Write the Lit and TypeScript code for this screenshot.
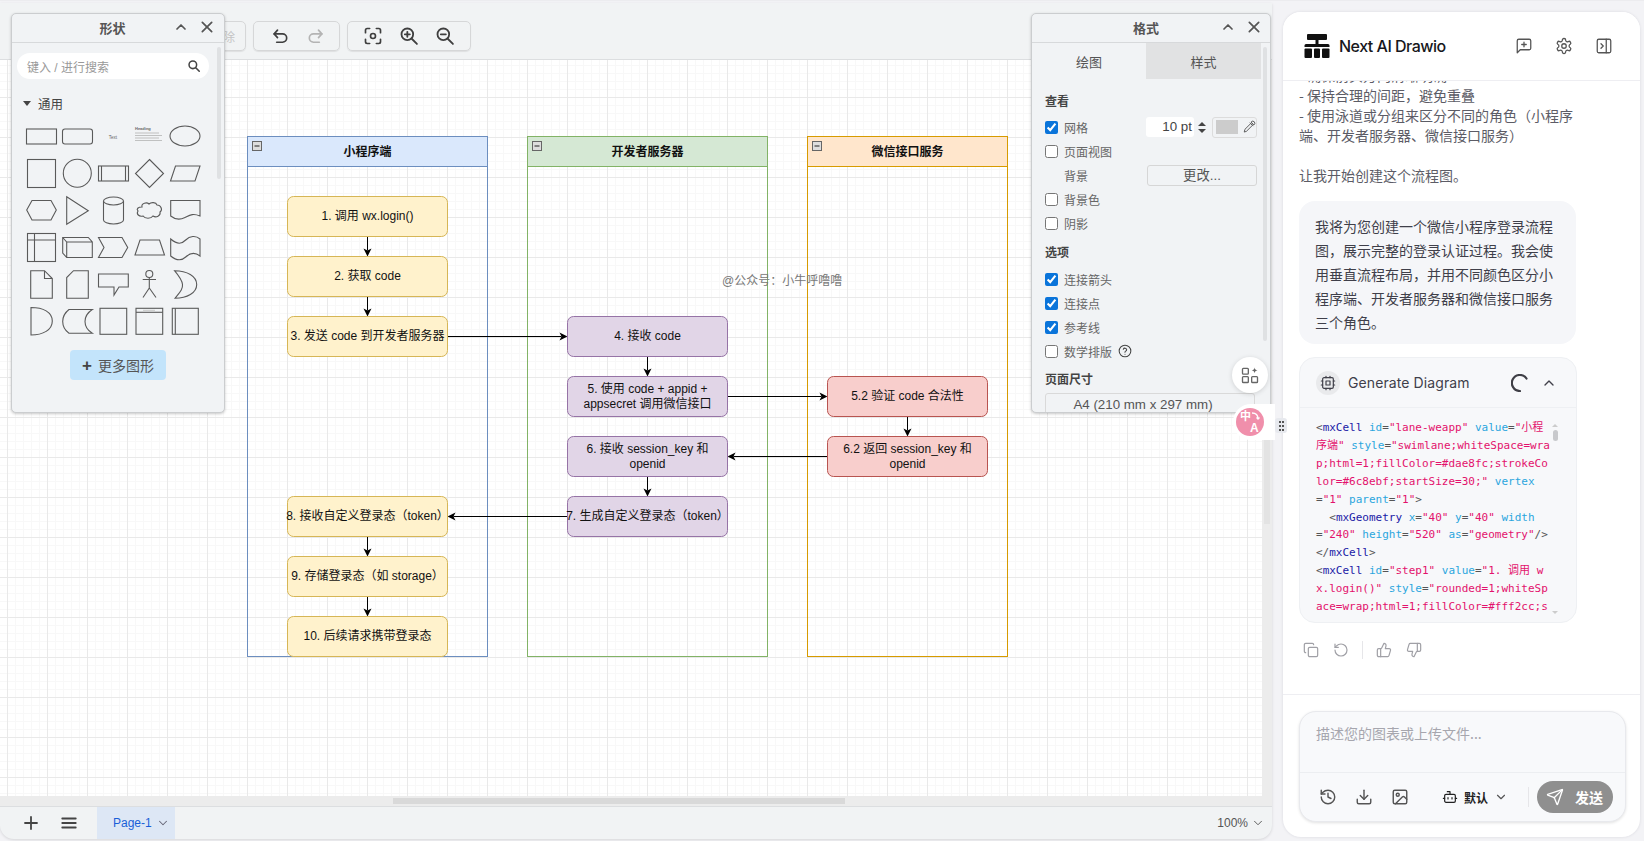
import { LitElement, html, css, svg } from 'lit';
import { customElement } from 'lit/decorators.js';

// --- diagram data (page coordinates) ---
type Tone = 'yellow' | 'purple' | 'red';
const lanes = [
  { x: 247.5, w: 240, title: '小程序端', fill: '#dae8fc', stroke: '#6c8ebf' },
  { x: 527.5, w: 240, title: '开发者服务器', fill: '#d5e8d4', stroke: '#82b366' },
  { x: 807.5, w: 200, title: '微信接口服务', fill: '#ffe6cc', stroke: '#d79b00' },
];
const tones: Record<Tone, [string, string]> = {
  yellow: ['#fff2cc', '#d6b656'],
  purple: ['#e1d5e7', '#9673a6'],
  red: ['#f8cecc', '#b85450'],
};
const nodes: { x: number; y: number; tone: Tone; text: string[] }[] = [
  { x: 287.5, y: 196.5, tone: 'yellow', text: ['1. 调用 wx.login()'] },
  { x: 287.5, y: 256.5, tone: 'yellow', text: ['2. 获取 code'] },
  { x: 287.5, y: 316.5, tone: 'yellow', text: ['3. 发送 code 到开发者服务器'] },
  { x: 567.5, y: 316.5, tone: 'purple', text: ['4. 接收 code'] },
  { x: 567.5, y: 376.5, tone: 'purple', text: ['5. 使用 code + appid +', 'appsecret 调用微信接口'] },
  { x: 827.5, y: 376.5, tone: 'red', text: ['5.2 验证 code 合法性'] },
  { x: 827.5, y: 436.5, tone: 'red', text: ['6.2 返回 session_key 和', 'openid'] },
  { x: 567.5, y: 436.5, tone: 'purple', text: ['6. 接收 session_key 和', 'openid'] },
  { x: 567.5, y: 496.5, tone: 'purple', text: ['7. 生成自定义登录态（token）'] },
  { x: 287.5, y: 496.5, tone: 'yellow', text: ['8. 接收自定义登录态（token）'] },
  { x: 287.5, y: 556.5, tone: 'yellow', text: ['9. 存储登录态（如 storage）'] },
  { x: 287.5, y: 616.5, tone: 'yellow', text: ['10. 后续请求携带登录态'] },
];
const edges = [
  [367.5, 236.5, 367.5, 256.5],
  [367.5, 296.5, 367.5, 316.5],
  [647.5, 356.5, 647.5, 376.5],
  [907.5, 416.5, 907.5, 436.5],
  [647.5, 476.5, 647.5, 496.5],
  [367.5, 536.5, 367.5, 556.5],
  [367.5, 596.5, 367.5, 616.5],
  [447.5, 336.5, 567.5, 336.5],
  [727.5, 396.5, 827.5, 396.5],
  [827.5, 456.5, 727.5, 456.5],
  [567.5, 516.5, 447.5, 516.5],
];

// --- code block tokens: p punctuation, t tag, a attr, s string ---
type Tok = [string, string];
const codeLines: Tok[][] = [
  [['p', '<'], ['t', 'mxCell'], ['a', ' id'], ['p', '='], ['s', '"lane-weapp"'], ['a', ' value'], ['p', '='], ['s', '"小程']],
  [['s', '序端"'], ['a', ' style'], ['p', '='], ['s', '"swimlane;whiteSpace=wra']],
  [['s', 'p;html=1;fillColor=#dae8fc;strokeCo']],
  [['s', 'lor=#6c8ebf;startSize=30;"'], ['a', ' vertex']],
  [['p', '='], ['s', '"1"'], ['a', ' parent'], ['p', '='], ['s', '"1"'], ['p', '>']],
  [['p', '  <'], ['t', 'mxGeometry'], ['a', ' x'], ['p', '='], ['s', '"40"'], ['a', ' y'], ['p', '='], ['s', '"40"'], ['a', ' width']],
  [['p', '='], ['s', '"240"'], ['a', ' height'], ['p', '='], ['s', '"520"'], ['a', ' as'], ['p', '='], ['s', '"geometry"'], ['p', '/>']],
  [['p', '</'], ['t', 'mxCell'], ['p', '>']],
  [['p', '<'], ['t', 'mxCell'], ['a', ' id'], ['p', '='], ['s', '"step1"'], ['a', ' value'], ['p', '='], ['s', '"1. 调用 w']],
  [['s', 'x.login()"'], ['a', ' style'], ['p', '='], ['s', '"rounded=1;whiteSp']],
  [['s', 'ace=wrap;html=1;fillColor=#fff2cc;s']],
];

// lucide style stroke icon
const icon = (body: unknown, size = 18, sw = 2) => html`<svg class="ico" width=${size} height=${size} viewBox="0 0 24 24" fill="none" stroke="currentColor" stroke-width=${sw} stroke-linecap="round" stroke-linejoin="round">${body}</svg>`;

const chevUp = svg`<path d="m6 15 6-6 6 6"/>`;
const chevDown = svg`<path d="m6 9 6 6 6-6"/>`;
const closeX = svg`<path d="M5 5l14 14M19 5 5 19"/>`;

@customElement('app-root')
export class AppRoot extends LitElement {
  static styles = css`
    * {
      box-sizing: border-box;
    }

    :host {
      display: block;
      width: 1644px;
      height: 841px;
      overflow: hidden;
      background: #f3f3f6;
      font-family: "Liberation Sans", "Noto Sans CJK SC", sans-serif;
      color: #444;
    }

    .ico {
      display: block;
      flex: none;
    }

    .page {
      position: relative;
      display: flex;
      height: 841px;
      border-top: 1px solid #ececef;
    }

    /* editor */
    .editor {
      position: relative;
      display: flex;
      flex-direction: column;
      width: 1272px;
      height: 836px;
      margin-top: 2px;
      background: #f1f3f4;
      border-radius: 0 0 14px 14px;
      overflow: hidden;
      box-shadow: 0 1px 3px rgba(0, 0, 0, .12);
    }

    .toolbar {
      display: flex;
      gap: 7px;
      height: 57px;
      padding: 18px 0 0 190px;
      border-bottom: 1px solid #dcdee0;
      flex: none;
    }

    .tgroup {
      display: flex;
      align-items: center;
      height: 30px;
      border: 1px solid #d6d7d8;
      border-radius: 5px;
      box-shadow: 0 1px 1px rgba(0, 0, 0, .08);
      color: #3f3f3f;
    }

    .tgroup.del {
      width: 56px;
      justify-content: flex-end;
      padding-right: 10px;
      font-size: 12px;
      color: #c4c4c4;
    }

    .tgroup.undo {
      width: 87px;
      gap: 16px;
      padding-left: 16px;
    }

    .tgroup.view {
      width: 124px;
      gap: 16px;
      padding-left: 15px;
    }

    .faded {
      color: #b4b4b4;
    }

    .stage {
      flex: 1;
      display: grid;
      grid-template-columns: 1262px 10px;
      grid-template-rows: 736px 10px;
    }

    .canvas {
      position: relative;
      background-color: #fff;
      background-image:
        linear-gradient(#e9e9e9 1px, transparent 1px),
        linear-gradient(90deg, #e9e9e9 1px, transparent 1px),
        linear-gradient(#f8f8f8 1px, transparent 1px),
        linear-gradient(90deg, #f8f8f8 1px, transparent 1px);
      background-size: 40px 40px, 40px 40px, 8px 8px, 8px 8px;
      background-position: 0 37px, 7px 0, 0 5px, 7px 0;
      overflow: hidden;
    }

    .diagram {
      position: absolute;
      left: 0;
      top: 0;
      width: 1262px;
      height: 736px;
    }

    .diagram text {
      font-family: "Liberation Sans", "Noto Sans CJK SC", sans-serif;
      font-size: 12px;
      fill: #111;
      text-anchor: middle;
    }

    .diagram text.lane {
      font-weight: 700;
    }

    .diagram text.mark {
      fill: #777;
      text-anchor: start;
    }

    .vtrack,
    .htrack,
    .corner {
      background: #ececec;
    }

    .vthumb {
      width: 6px;
      height: 464px;
      margin-left: 2px;
      background: #e3e3e3;
    }

    .hthumb {
      width: 452px;
      height: 6px;
      margin: 2px 0 0 393px;
      background: #d9d9d9;
    }

    .bottom {
      flex: 1;
      display: flex;
      align-items: center;
      border-top: 1px solid #dcdee0;
      font-size: 12px;
      color: #555;
    }

    .bottom .plus {
      margin-left: 22px;
      color: #444;
    }

    .bottom .menu {
      margin-left: 20px;
      color: #444;
    }

    .pagetab {
      display: flex;
      align-items: center;
      width: 78px;
      height: 100%;
      margin-left: 19px;
      padding-left: 16px;
      gap: 4px;
      background: #dde7f5;
      color: #1a5fd8;
    }

    .pagetab .ico {
      color: #667;
    }

    .zoomval {
      display: flex;
      align-items: center;
      gap: 3px;
      margin-left: auto;
      margin-right: 7px;
      color: #555;
    }

    /* floating panels */
    .panel {
      position: absolute;
      top: 10px;
      height: 400px;
      background: #f1f3f5;
      border: 1px solid #cbcdcf;
      border-radius: 5px;
      box-shadow: 0 1px 3px rgba(0, 0, 0, .22);
      overflow: hidden;
    }

    .panel.shapes {
      left: 11px;
      width: 214px;
    }

    .panel.format {
      left: 1031px;
      width: 240px;
    }

    .phead {
      display: flex;
      align-items: center;
      height: 29px;
      padding: 0 9px 2px 40px;
      border-bottom: 1px solid #d7d9db;
      color: #555;
    }

    .ptitle {
      flex: 1;
      text-align: center;
      font-size: 13px;
      font-weight: 700;
    }

    .phead .chev {
      margin-right: 10px;
    }

    .format .phead {
      padding-right: 8px;
    }

    .search {
      display: flex;
      align-items: center;
      justify-content: space-between;
      width: 192px;
      height: 26px;
      margin: 10px 0 0 5px;
      padding: 0 8px 0 10px;
      background: #fff;
      border-radius: 13px;
      font-size: 12px;
      color: #999;
    }

    .search .ico {
      color: #444;
    }

    .section {
      display: flex;
      align-items: center;
      gap: 7px;
      height: 18px;
      margin: 15px 0 0 11px;
      font-size: 12.5px;
      color: #444;
    }

    .section i {
      width: 0;
      height: 0;
      border: 4px solid transparent;
      border-top: 5px solid #444;
      border-bottom: 0;
    }

    .shapeset {
      display: block;
      margin: 8px 0 0 3px;
    }

    .more {
      display: flex;
      align-items: center;
      justify-content: center;
      gap: 6px;
      width: 96px;
      height: 30px;
      margin: 10px 0 0 58px;
      background: #c3e4fb;
      border-radius: 4px;
      font-size: 14px;
      color: #555;
    }

    .more b {
      font-size: 17px;
      line-height: 1;
      color: #444;
    }

    .pscroll {
      position: absolute;
      width: 4px;
      top: 33px;
      background: #dfe1e3;
      border-radius: 2px;
    }

    .shapes .pscroll {
      left: 205px;
      height: 132px;
    }

    .format .pscroll {
      left: 231px;
      height: 294px;
    }

    .tabs {
      display: flex;
      height: 36px;
      font-size: 13px;
      color: #555;
    }

    .tabs div {
      display: flex;
      align-items: center;
      justify-content: center;
      width: 114px;
    }

    .tabs .off {
      width: 115px;
      background: #e1e2e3;
    }

    .fbody {
      padding: 14px 13px 0 13px;
      font-size: 12px;
      color: #666;
    }

    .ftitle {
      height: 18px;
      margin-bottom: 4px;
      line-height: 18px;
      font-weight: 700;
      color: #444;
    }

    .ftitle.gap {
      margin-top: 9px;
      margin-bottom: 5px;
    }

    .ftitle.gap2 {
      margin-top: 8px;
      margin-bottom: 4px;
    }

    .frow {
      display: flex;
      align-items: center;
      height: 24px;
    }

    .frow input {
      width: 13px;
      height: 13px;
      margin: 0 6px 0 0;
      accent-color: #0a74da;
    }

    .frow .indent {
      padding-left: 19px;
    }

    .num {
      width: 48px;
      height: 20px;
      margin-left: auto;
      padding-right: 2px;
      text-align: right;
      line-height: 20px;
      font-size: 13.33px;
      color: #444;
      background: #fff;
      border-radius: 3px;
    }

    .stepper {
      display: flex;
      flex-direction: column;
      align-items: center;
      justify-content: center;
      gap: 3px;
      width: 11px;
      height: 20px;
      margin-left: 2px;
    }

    .stepper i {
      width: 0;
      height: 0;
      border: 4px solid transparent;
      border-bottom: 4px solid #444;
      border-top: 0;
    }

    .stepper i.dn {
      border-top: 4px solid #444;
      border-bottom: 0;
    }

    .well {
      display: flex;
      align-items: center;
      gap: 4px;
      width: 45px;
      height: 21px;
      margin-left: 5px;
      padding-left: 3px;
      border: 1px solid #dcdcdc;
      border-radius: 3px;
      color: #555;
    }

    .well span {
      width: 23px;
      height: 14px;
      background: #ccc;
    }

    .change {
      width: 110px;
      height: 21px;
      margin-left: auto;
      line-height: 20px;
      text-align: center;
      font-size: 13.33px;
      border: 1px solid #d6d6d6;
      border-radius: 3px;
      color: #555;
    }

    .help {
      margin-left: 6px;
      color: #444;
    }

    .select {
      width: 210px;
      height: 30px;
      padding-right: 14px;
      line-height: 22px;
      text-align: center;
      font-size: 13.33px;
      border: 1px solid #d9d9d9;
      border-radius: 3px;
      color: #555;
    }

    /* floating helpers at the window's split */
    .fab {
      position: absolute;
      left: 1232px;
      top: 356px;
      display: flex;
      align-items: center;
      justify-content: center;
      width: 36px;
      height: 36px;
      background: #fff;
      border-radius: 50%;
      box-shadow: 0 1px 5px rgba(0, 0, 0, .14);
      color: #666;
    }

    .translate {
      position: absolute;
      left: 1233px;
      top: 403px;
      display: flex;
      align-items: center;
      width: 42px;
      height: 36px;
      padding-left: 3px;
      background: #fff;
      border-radius: 18px 0 0 18px;
    }

    .translate .disc {
      position: relative;
      width: 28px;
      height: 28px;
      background: #f08fab;
      border-radius: 50%;
      color: #fff;
      font-weight: 700;
      line-height: 1;
    }

    .disc span {
      position: absolute;
    }

    .disc .zh {
      left: 4px;
      top: 3px;
      font-size: 11px;
    }

    .disc .en {
      left: 14px;
      top: 14px;
      font-size: 12px;
    }

    .disc svg {
      position: absolute;
      left: 15px;
      top: 4px;
    }

    .handle {
      position: absolute;
      left: 1275px;
      top: 417px;
      display: grid;
      grid-template-columns: 2px 2px;
      grid-auto-rows: 2px;
      gap: 2px 1px;
      align-content: center;
      justify-content: center;
      width: 12px;
      height: 15px;
      background: #e7e9ee;
      border-radius: 3px;
    }

    .handle i {
      background: #555;
    }

    /* chat */
    .chat {
      display: flex;
      flex-direction: column;
      width: 357px;
      height: 825px;
      margin: 11px 0 0 11px;
      background: #fff;
      border-radius: 18px;
      box-shadow: 0 0 3px rgba(30, 30, 60, .12);
      overflow: hidden;
      font-family: "Inter", "Noto Sans CJK SC", sans-serif;
    }

    .chead {
      display: flex;
      align-items: center;
      height: 69px;
      padding: 0 27px 0 21px;
      border-bottom: 1px solid #eeeef2;
      flex: none;
      position: relative;
      z-index: 1;
      background: #fff;
      color: #555;
    }

    .logo {
      margin-right: 9px;
    }

    .brand {
      margin-right: auto;
      font-size: 16px;
      font-weight: 500;
      letter-spacing: -.5px;
      color: #17171c;
    }

    .chead .ico + .ico {
      margin-left: 22px;
    }

    .msgs {
      flex: 1;
      overflow: hidden;
      padding: 0 16px;
    }

    .plain {
      margin-top: -16px;
      font-size: 14px;
      line-height: 20px;
      color: #5c5c66;
      font-family: "Noto Sans CJK SC", sans-serif;
    }

    .bubble {
      width: 277px;
      height: 143px;
      margin-top: 16px;
      padding: 13px 16px;
      font-size: 14px;
      line-height: 24px;
      color: #3f3f4a;
      background: #f5f6f9;
      border-radius: 16px;
      font-family: "Noto Sans CJK SC", sans-serif;
    }

    .tool {
      position: relative;
      width: 278px;
      height: 266px;
      margin-top: 13px;
      background: #f7f8fa;
      border: 1px solid #eef0f3;
      border-radius: 16px;
      overflow: hidden;
    }

    .thead {
      display: flex;
      align-items: center;
      height: 50px;
      padding: 0 19px 0 16px;
      border-bottom: 1px solid #eef0f3;
      color: #40404a;
    }

    .chip {
      display: flex;
      align-items: center;
      justify-content: center;
      width: 24px;
      height: 24px;
      margin-right: 8px;
      background: #e9eaec;
      border-radius: 50%;
    }

    .tname {
      margin-right: auto;
      font-size: 14px;
      letter-spacing: .1px;
    }

    .spin {
      margin-right: 12px;
    }

    .code {
      padding: 11px 0 0 16px;
      font-family: "DejaVu Sans Mono", "Noto Sans CJK SC", monospace;
      font-size: 11px;
      line-height: 17.9px;
      white-space: pre;
    }

    .code .p { color: #555; }
    .code .t { color: #1a1aa6; }
    .code .a { color: #2ba6de; }
    .code .s { color: #e3126c; }

    .cscroll {
      position: absolute;
      left: 251px;
      top: 66px;
      display: flex;
      flex-direction: column;
      align-items: center;
      height: 190px;
      width: 8px;
    }

    .cscroll i {
      width: 0;
      height: 0;
      border: 3px solid transparent;
      border-bottom: 3px solid #ccc;
      border-top: 0;
    }

    .cscroll b {
      width: 5px;
      height: 11px;
      margin-top: 3px;
      background: #c8c9cc;
      border-radius: 3px;
    }

    .cscroll i.dn {
      margin-top: auto;
      border-top: 3px solid #ccc;
      border-bottom: 0;
    }

    .actions {
      display: flex;
      align-items: center;
      gap: 14px;
      margin-top: 18px;
      padding-left: 4px;
      color: #a0a0a6;
    }

    .actions u {
      width: 1px;
      height: 18px;
      margin: 0 -1px;
      background: #e6e6e9;
    }

    .foot {
      height: 143px;
      padding: 16px 14px 0 16px;
      border-top: 1px solid #eeeef2;
      flex: none;
    }

    .input {
      height: 111px;
      background: #f8f9fb;
      border: 1px solid #e8e9ed;
      border-radius: 17px;
      box-shadow: 0 1px 3px rgba(0, 0, 0, .12);
      display: flex;
      flex-direction: column;
    }

    .ph {
      height: 61px;
      padding: 11px 16px;
      font-size: 14px;
      line-height: 20px;
      color: #a6a6ae;
      border-bottom: 1px solid #eceef1;
      font-family: "Noto Sans CJK SC", sans-serif;
    }

    .ibar {
      flex: 1;
      display: flex;
      align-items: center;
      padding: 0 12px 0 19px;
      gap: 18px;
      color: #555;
    }

    .model {
      display: flex;
      align-items: center;
      flex: none;
      gap: 6px;
      margin-left: 15px;
      font-size: 12px;
      font-weight: 700;
      white-space: nowrap;
      color: #222;
    }

    .model .ico:last-child {
      margin-left: 0;
      color: #555;
    }

    .ibar u {
      width: 1px;
      height: 20px;
      margin-left: auto;
      margin-right: -10px;
      background: #e6e6e9;
    }

    .send {
      display: flex;
      align-items: center;
      flex: none;
      gap: 11px;
      width: 76px;
      height: 32px;
      padding-left: 9px;
      background: #8f8f8f;
      border-radius: 16px;
      font-size: 14px;
      font-weight: 700;
      white-space: nowrap;
      color: #fff;
    }
  `;

  renderDiagram() {
    return svg`<g transform="translate(0,-60)">
      ${lanes.map((l) => svg`
        <rect x=${l.x} y="136.5" width=${l.w} height="520" fill="none" stroke=${l.stroke}/>
        <rect x=${l.x} y="136.5" width=${l.w} height="30" fill=${l.fill} stroke=${l.stroke}/>
        <rect x=${l.x + 5} y="141.5" width="9" height="9" fill="#ddd" stroke="#666"/>
        <path d="M${l.x + 7} 146h5" stroke="#222"/>
        <text class="lane" x=${l.x + l.w / 2} y="155.5">${l.title}</text>
      `)}
      ${edges.map(([x1, y1, x2, y2]) => {
        const dx = Math.sign(x2 - x1);
        const dy = Math.sign(y2 - y1);
        // classic draw.io head: tip at the end, notch 2px short of the base
        const head = [
          [x2, y2],
          [x2 - dx * 8 - dy * 4, y2 - dy * 8 - dx * 4],
          [x2 - dx * 6, y2 - dy * 6],
          [x2 - dx * 8 + dy * 4, y2 - dy * 8 + dx * 4],
        ].map((p) => p.join(',')).join(' ');
        return svg`<line x1=${x1} y1=${y1} x2=${x2 - dx * 6} y2=${y2 - dy * 6} stroke="#000"/><polygon points=${head} fill="#000"/>`;
      })}
      ${nodes.map((n) => {
        const [fill, stroke] = tones[n.tone];
        const cx = n.x + 80;
        const start = n.text.length > 1 ? n.y + 16 : n.y + 23.5;
        return svg`<rect x=${n.x} y=${n.y} width="160" height="40" rx="6" fill=${fill} stroke=${stroke}/>
          ${n.text.map((t, i) => svg`<text x=${cx} y=${start + i * 15}>${t}</text>`)}`;
      })}
      <text class="mark" x="722" y="285">@公众号：小牛呼噜噜</text>
    </g>`;
  }

  renderShapes() {
    return html`<svg class="shapeset" width="200" height="220" viewBox="0 0 200 220" fill="none" stroke="#5a5a5a" stroke-width="1.1">
      <rect x="11.5" y="9" width="30" height="15"/>
      <rect x="47.5" y="9" width="30" height="15" rx="2.5"/>
      <text x="98" y="18.5" font-size="4.5" fill="#666" stroke="none" text-anchor="middle">Text</text>
      <text x="120" y="9.5" font-size="4" font-weight="700" fill="#666" stroke="none">Heading</text>
      <path d="M120 13h24M120 15.5h27M120 18h24M120 20.5h27" stroke="#aaa" stroke-width=".7"/>
      <ellipse cx="170" cy="16" rx="15" ry="10"/>

      <rect x="12.5" y="39.5" width="28" height="28"/>
      <circle cx="62.3" cy="53.3" r="14"/>
      <rect x="83.5" y="46" width="30" height="15"/>
      <path d="M86.5 46v15M110.5 46v15"/>
      <path d="M134.5 39.5 148.5 53.5 134.5 67.5 120.5 53.5Z"/>
      <path d="M160.5 46H185L180 61H155.5Z"/>

      <path d="M11.7 90 17 80.5H36L41.3 90 36 100H17Z"/>
      <path d="M51.7 76.7 73.3 90.7 51.7 104.3Z"/>
      <path d="M88.5 81a10 4 0 0 1 20 0v19a10 4 0 0 1-20 0ZM88.5 81a10 4 0 0 0 20 0"/>
      <path d="M127 87c-1-4 5-5 7-3 2-2 7-2 8 1 4 0 6 5 3 7 1 4-4 6-7 4-2 3-8 3-10 0-4 1-7-2-5-5-2-2 0-4 4-4Z"/>
      <path d="M155.7 80.5H185V96c-7-3-10-1-15 1.5-5 2.5-10 2-14.3-1.5Z"/>

      <rect x="12.5" y="113.5" width="28" height="28"/>
      <path d="M19.5 113.5v28M12.5 120h28"/>
      <path d="M47.7 117.5H73.3L77.3 122V137.5H51.7L47.7 133ZM47.7 117.5 51.7 122H77.3M51.7 122V137.5"/>
      <path d="M83.5 117.5H107L112.7 127.5 107 137.5H83.5L89 127.5Z"/>
      <path d="M125 120H144.5L149.5 135H120Z"/>
      <path d="M155.7 119c7 6 11 5 15 1s10-5 14.3-1v17c-5-4-10-3-14.3 1s-9 4-15-1Z"/>

      <path d="M15.7 150.7H29.5L37.3 158.5V178.3H15.7ZM29.5 150.7V158.5H37.3"/>
      <path d="M58.5 150.7H73.3V178.3H51.7V157.5Z"/>
      <path d="M83.5 154H113.3V167H104L99 175V167H83.5Z"/>
      <circle cx="134.3" cy="154" r="3.5"/>
      <path d="M134.3 157.5V168M127.7 159.5H141M134.3 168 128 177.5M134.3 168 141 177.5"/>
      <path d="M159.5 150.7C172 150.7 181.7 156 181.7 164.5 181.7 173 172 178.3 160 178.3 165 172 168 169 167.5 164.5 167 160 164 156 159.5 150.7Z"/>

      <path d="M16 187.5C28 187.5 37.3 192 37.3 201 37.3 210 28 215 16 215Z"/>
      <path d="M54 189.5H77.3C72 193 70 198 70 201.5 70 205 72 210 77.3 213.3H54C49.5 210 47.7 205 47.7 201.5 47.7 198 49.5 193 54 189.5Z"/>
      <rect x="85" y="188.3" width="26.7" height="26"/>
      <rect x="121" y="188.3" width="26.7" height="26"/>
      <path d="M121 192.3h26.7"/>
      <path d="M128 190.3h12" stroke="#bbb" stroke-width=".8"/>
      <rect x="157.3" y="188.3" width="26" height="26"/>
      <path d="M160.3 188.3v26"/>
    </svg>`;
  }

  renderToolbar() {
    return html`<div class="toolbar">
      <div class="tgroup del">删除</div>
      <div class="tgroup undo">
        ${icon(svg`<path d="M9 5 5 9.5 9 14"/><path d="M5 9.5h10a5 5 0 0 1 0 10H8"/>`, 20, 2)}
        <span class="faded">${icon(svg`<path d="M15 5l4 4.5L15 14"/><path d="M19 9.5H9a5 5 0 0 0 0 10h7"/>`, 20, 2)}</span>
      </div>
      <div class="tgroup view">
        ${icon(svg`<path d="M8 3H5a2 2 0 0 0-2 2v3M16 3h3a2 2 0 0 1 2 2v3M3 16v3a2 2 0 0 0 2 2h3M21 16v3a2 2 0 0 1-2 2h-3"/><circle cx="12" cy="12" r="3"/>`, 20, 2)}
        ${icon(svg`<circle cx="10" cy="10" r="7"/><path d="m15 15 6.5 6.5M10 7v6M7 10h6"/>`, 20, 2.2)}
        ${icon(svg`<circle cx="10" cy="10" r="7"/><path d="m15 15 6.5 6.5M7 10h6"/>`, 20, 2.2)}
      </div>
    </div>`;
  }

  renderFormat() {
    return html`<div class="panel format">
      <div class="phead">
        <div class="ptitle">格式</div>
        <span class="chev">${icon(chevUp, 16, 2.6)}</span>
        ${icon(closeX, 16, 2.6)}
      </div>
      <div class="tabs"><div>绘图</div><div class="off">样式</div></div>
      <div class="fbody">
        <div class="ftitle">查看</div>
        <div class="frow">
          <input type="checkbox" checked /><span>网格</span>
          <div class="num">10 pt</div>
          <div class="stepper"><i></i><i class="dn"></i></div>
          <div class="well"><span></span>${icon(svg`<path d="m4 20 1-4L15 6l3 3L8 19ZM14 5l5 5M16 3a2 2 0 0 1 5 5Z"/>`, 14, 1.6)}</div>
        </div>
        <div class="frow"><input type="checkbox" /><span>页面视图</span></div>
        <div class="frow"><span class="indent">背景</span><div class="change">更改...</div></div>
        <div class="frow"><input type="checkbox" /><span>背景色</span></div>
        <div class="frow"><input type="checkbox" /><span>阴影</span></div>
        <div class="ftitle gap">选项</div>
        <div class="frow"><input type="checkbox" checked /><span>连接箭头</span></div>
        <div class="frow"><input type="checkbox" checked /><span>连接点</span></div>
        <div class="frow"><input type="checkbox" checked /><span>参考线</span></div>
        <div class="frow">
          <input type="checkbox" /><span>数学排版</span>
          <span class="help">${icon(svg`<circle cx="12" cy="12" r="10"/><path d="M9.1 9a3 3 0 0 1 5.8 1c0 2-3 2.5-3 4"/><path d="M12 17.5h.01"/>`, 14, 1.8)}</span>
        </div>
        <div class="ftitle gap2">页面尺寸</div>
        <div class="select">A4 (210 mm x 297 mm)</div>
      </div>
      <div class="pscroll"></div>
    </div>`;
  }

  renderChat() {
    return html`<section class="chat">
      <header class="chead">
        <svg class="logo" width="26" height="26" viewBox="0 0 26 26" fill="#111">
          <rect x="3" y="1" width="20" height="6" rx="1"/>
          <rect x="11.5" y="7" width="3" height="4"/>
          <path d="M2 11h22a1.5 1.5 0 0 1 1.5 1.5V14H.5v-1.5A1.5 1.5 0 0 1 2 11Z"/>
          <rect x="0.5" y="15.5" width="7.5" height="9.5" rx="1"/>
          <rect x="10" y="15.5" width="6" height="9.5" rx="1"/>
          <rect x="18" y="15.5" width="7.5" height="9.5" rx="1"/>
        </svg>
        <div class="brand">Next AI Drawio</div>
        ${icon(svg`<path d="M21 15a2 2 0 0 1-2 2H7l-4 4V5a2 2 0 0 1 2-2h14a2 2 0 0 1 2 2z"/><path d="M12 7v6M9 10h6"/>`, 18, 1.7)}
        ${icon(svg`<path d="M12.22 2h-.44a2 2 0 0 0-2 2v.18a2 2 0 0 1-1 1.73l-.43.25a2 2 0 0 1-2 0l-.15-.08a2 2 0 0 0-2.73.73l-.22.38a2 2 0 0 0 .73 2.73l.15.1a2 2 0 0 1 1 1.72v.51a2 2 0 0 1-1 1.74l-.15.09a2 2 0 0 0-.73 2.73l.22.38a2 2 0 0 0 2.73.73l.15-.08a2 2 0 0 1 2 0l.43.25a2 2 0 0 1 1 1.73V20a2 2 0 0 0 2 2h.44a2 2 0 0 0 2-2v-.18a2 2 0 0 1 1-1.73l.43-.25a2 2 0 0 1 2 0l.15.08a2 2 0 0 0 2.73-.73l.22-.39a2 2 0 0 0-.73-2.73l-.15-.08a2 2 0 0 1-1-1.74v-.5a2 2 0 0 1 1-1.74l.15-.09a2 2 0 0 0 .73-2.73l-.22-.38a2 2 0 0 0-2.73-.73l-.15.08a2 2 0 0 1-2 0l-.43-.25a2 2 0 0 1-1-1.73V4a2 2 0 0 0-2-2z"/><circle cx="12" cy="12" r="3"/>`, 18, 1.7)}
        ${icon(svg`<rect x="3" y="3" width="18" height="18" rx="2"/><path d="M15 3v18M8 9l3 3-3 3"/>`, 18, 1.7)}
      </header>
      <div class="msgs">
        <div class="plain">
          - 确保箭头方向清晰明确<br />
          - 保持合理的间距，避免重叠<br />
          - 使用泳道或分组来区分不同的角色（小程序<br />
          端、开发者服务器、微信接口服务）<br /><br />
          让我开始创建这个流程图。
        </div>
        <div class="bubble">
          我将为您创建一个微信小程序登录流程<br />
          图，展示完整的登录认证过程。我会使<br />
          用垂直流程布局，并用不同颜色区分小<br />
          程序端、开发者服务器和微信接口服务<br />
          三个角色。
        </div>
        <div class="tool">
          <div class="thead">
            <div class="chip">${icon(svg`<rect x="4" y="4" width="16" height="16" rx="2"/><rect x="9" y="9" width="6" height="6"/><path d="M15 2v2M15 20v2M2 15h2M2 9h2M20 15h2M20 9h2M9 2v2M9 20v2"/>`, 16, 1.8)}</div>
            <div class="tname">Generate Diagram</div>
            <svg class="spin" width="18" height="18" viewBox="0 0 18 18" fill="none" stroke="#3f3f46" stroke-width="2.2" stroke-linecap="round"><path d="M15.5 4.5A8 8 0 1 0 9 17"/></svg>
            ${icon(chevUp, 16, 2)}
          </div>
          <div class="code">${codeLines.map((line) => html`<div>${line.map(([c, t]) => html`<span class=${c}>${t}</span>`)}</div>`)}</div>
          <div class="cscroll"><i></i><b></b><i class="dn"></i></div>
        </div>
        <div class="actions">
          ${icon(svg`<rect x="8" y="8" width="14" height="14" rx="2"/><path d="M4 16c-1.1 0-2-.9-2-2V4c0-1.1.9-2 2-2h10c1.1 0 2 .9 2 2"/>`, 16, 1.8)}
          ${icon(svg`<path d="M3 12a9 9 0 1 0 9-9 9.75 9.75 0 0 0-6.74 2.74L3 8"/><path d="M3 3v5h5"/>`, 16, 1.8)}
          <u></u>
          ${icon(svg`<path d="M7 10v12"/><path d="M15 5.88 14 10h5.83a2 2 0 0 1 1.92 2.56l-2.33 8A2 2 0 0 1 17.5 22H4a2 2 0 0 1-2-2v-8a2 2 0 0 1 2-2h2.76a2 2 0 0 0 1.79-1.11L12 2a3.13 3.13 0 0 1 3 3.88Z"/>`, 16, 1.8)}
          ${icon(svg`<path d="M17 14V2"/><path d="M9 18.12 10 14H4.17a2 2 0 0 1-1.92-2.56l2.33-8A2 2 0 0 1 6.5 2H20a2 2 0 0 1 2 2v8a2 2 0 0 1-2 2h-2.76a2 2 0 0 0-1.79 1.11L12 22a3.13 3.13 0 0 1-3-3.88Z"/>`, 16, 1.8)}
        </div>
      </div>
      <footer class="foot">
        <div class="input">
          <div class="ph">描述您的图表或上传文件...</div>
          <div class="ibar">
            ${icon(svg`<path d="M3 12a9 9 0 1 0 9-9 9.75 9.75 0 0 0-6.74 2.74L3 8"/><path d="M3 3v5h5"/><path d="M12 7v5l4 2"/>`, 18, 1.9)}
            ${icon(svg`<path d="M21 15v4a2 2 0 0 1-2 2H5a2 2 0 0 1-2-2v-4"/><path d="m7 10 5 5 5-5"/><path d="M12 15V3"/>`, 18, 1.9)}
            ${icon(svg`<rect x="3" y="3" width="18" height="18" rx="2"/><circle cx="9" cy="9" r="2"/><path d="m21 15-3.086-3.086a2 2 0 0 0-2.828 0L6 21"/>`, 18, 1.9)}
            <div class="model">
              ${icon(svg`<path d="M12 8V4H8"/><rect x="4" y="8" width="16" height="12" rx="2"/><path d="M2 14h2M20 14h2M15 13v2M9 13v2"/>`, 16, 1.8)}
              <span>默认</span>
              ${icon(chevDown, 14, 2)}
            </div>
            <u></u>
            <div class="send">
              ${icon(svg`<path d="M14.536 21.686a.5.5 0 0 0 .937-.024l6.5-19a.496.496 0 0 0-.635-.635l-19 6.5a.5.5 0 0 0-.024.937l7.93 3.18a2 2 0 0 1 1.112 1.11z"/><path d="m21.854 2.147-10.94 10.939"/>`, 18, 1.8)}
              <span>发送</span>
            </div>
          </div>
        </div>
      </footer>
    </section>`;
  }

  render() {
    return html`<div class="page">
      <main class="editor">
        ${this.renderToolbar()}
        <div class="stage">
          <div class="canvas">
            <svg class="diagram" viewBox="0 0 1262 736">${this.renderDiagram()}</svg>
          </div>
          <div class="vtrack"><div class="vthumb"></div></div>
          <div class="htrack"><div class="hthumb"></div></div>
          <div class="corner"></div>
        </div>
        <div class="bottom">
          <span class="plus">${icon(svg`<path d="M12 4v16M4 12h16"/>`, 18, 2.4)}</span>
          <span class="menu">${icon(svg`<path d="M3 6h18M3 12h18M3 18h18"/>`, 18, 2.4)}</span>
          <div class="pagetab"><span>Page-1</span>${icon(chevDown, 14, 1.8)}</div>
          <div class="zoomval"><span>100%</span>${icon(chevDown, 14, 1.6)}</div>
        </div>
        <div class="panel shapes">
          <div class="phead">
            <div class="ptitle">形状</div>
            <span class="chev">${icon(chevUp, 16, 2.6)}</span>
            ${icon(closeX, 16, 2.6)}
          </div>
          <div class="search">
            <span>键入 / 进行搜索</span>
            ${icon(svg`<circle cx="10" cy="10" r="6.5"/><path d="m15 15 6 6"/>`, 14, 2.6)}
          </div>
          <div class="section"><i></i><span>通用</span></div>
          ${this.renderShapes()}
          <div class="more"><b>+</b><span>更多图形</span></div>
          <div class="pscroll"></div>
        </div>
        ${this.renderFormat()}
      </main>
      ${this.renderChat()}
      <div class="fab">${icon(svg`<rect x="3" y="4" width="7" height="7" rx="1"/><rect x="3" y="14" width="7" height="7" rx="1"/><rect x="14" y="14" width="7" height="7" rx="1"/><path d="M17.5 3c.4 2.4 1.1 3.1 3.5 3.5-2.4.4-3.1 1.1-3.5 3.5-.4-2.4-1.1-3.1-3.5-3.5 2.4-.4 3.1-1.1 3.5-3.5Z" fill="currentColor" stroke="none"/>`, 20, 1.6)}</div>
      <div class="translate"><div class="disc">
        <span class="zh">中</span><span class="en">A</span>
        <svg width="9" height="9" viewBox="0 0 9 9" fill="none" stroke="#fff" stroke-width="1.3"><path d="M1 1c3.5 0 6 2 6 6M5.5 5.5 7 7l1.5-1.5"/></svg>
      </div></div>
      <div class="handle"><i></i><i></i><i></i><i></i><i></i><i></i></div>
    </div>`;
  }
}
